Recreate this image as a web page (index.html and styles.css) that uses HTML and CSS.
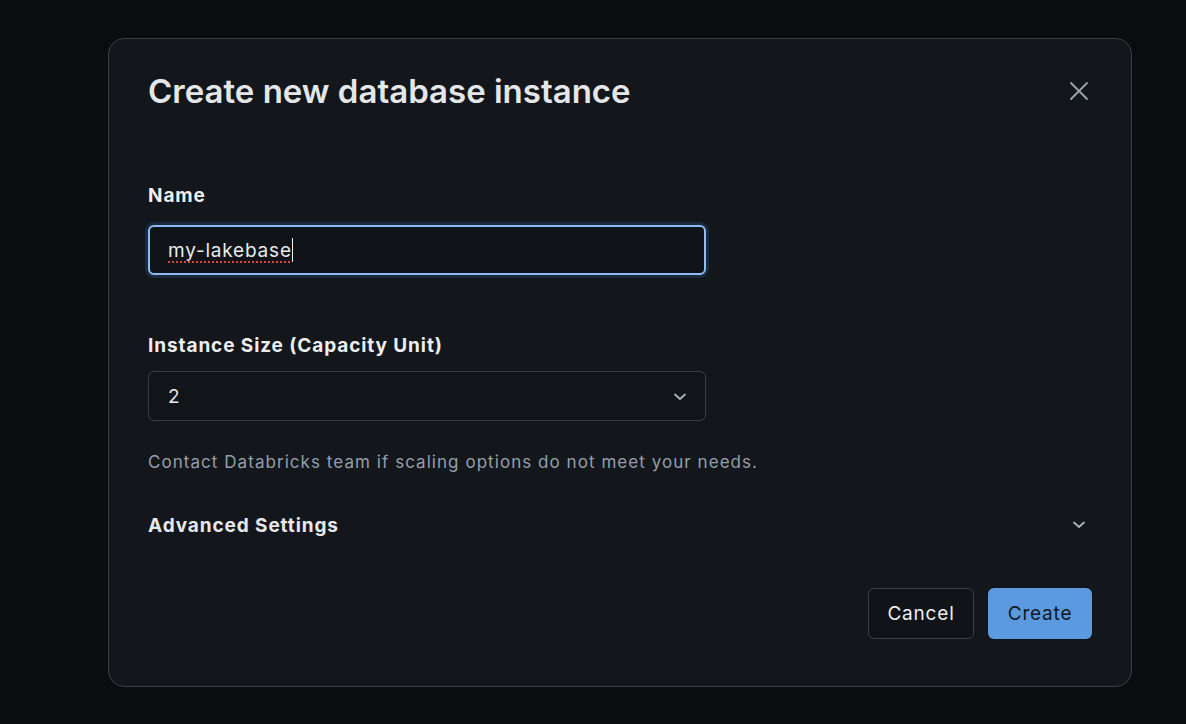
FILE: index.html
```html
<!DOCTYPE html>
<html lang="en">
<head>
<meta charset="utf-8">
<title>Create new database instance</title>
<link rel="stylesheet" href="styles.css">
</head>
<body>
<div class="page">
  <div class="modal">
    <div class="header">
      <h1 class="title">Create new database instance</h1>
      <button class="close" aria-label="Close">
        <svg width="20" height="20" viewBox="0 0 20 20"><path d="M2 2 L18 18 M18 2 L2 18" stroke="#9aa4af" stroke-width="1.8" stroke-linecap="round" fill="none"/></svg>
      </button>
    </div>

    <div class="field field-name">
      <div class="label">Name</div>
      <div class="input focused"><span class="typed">my-lakebase</span><span class="caret"></span></div>
    </div>

    <div class="field field-size">
      <div class="label">Instance Size (Capacity Unit)</div>
      <div class="input select">
        <span>2</span>
        <svg class="chev" width="14" height="8" viewBox="0 0 14 8"><path d="M2 1.5 L7 6 L12 1.5" stroke="#aab3bd" stroke-width="1.8" stroke-linecap="round" stroke-linejoin="round" fill="none"/></svg>
      </div>
    </div>

    <p class="help">Contact Databricks team if scaling options do not meet your needs.</p>

    <div class="advanced">
      <span>Advanced Settings</span>
      <svg class="chev-small" width="14" height="8" viewBox="0 0 14 8"><path d="M2 1.5 L7 6 L12 1.5" stroke="#aab3bd" stroke-width="1.8" stroke-linecap="round" stroke-linejoin="round" fill="none"/></svg>
    </div>

    <div class="footer">
      <button class="btn btn-cancel">Cancel</button>
      <button class="btn btn-create">Create</button>
    </div>
  </div>
</div>
</body>
</html>
```
FILE: styles.css
```css
html, body {
  margin: 0;
  padding: 0;
  background: #0a0c0f;
  font-family: Inter, "Noto Sans", "Liberation Sans", sans-serif;
}

.page {
  width: 1186px;
  height: 724px;
  padding: 38px 0 0 108px;
  box-sizing: border-box;
}

.modal {
  width: 1024px;
  height: 649px;
  box-sizing: border-box;
  background: #13171b;
  border: 1px solid #3a4047;
  border-radius: 16px;
  padding: 32px 39px 0 39px;
  display: flex;
  flex-direction: column;
}

.header {
  display: flex;
  align-items: center;
  justify-content: space-between;
  height: 40px;
}

.title {
  margin: 0;
  font-size: 33px;
  line-height: 40px;
  font-weight: 600;
  color: #e4e6e9;
  letter-spacing: 0;
}

.close {
  width: 26px;
  height: 26px;
  padding: 0;
  background: none;
  border: none;
  display: flex;
  align-items: center;
  justify-content: center;
}

.field-name {
  margin-top: 73px;
}

.field-size {
  margin-top: 59px;
}

.label {
  font-size: 19px;
  line-height: 24px;
  font-weight: 650;
  color: #eceef0;
  letter-spacing: 0.9px;
}

.input {
  width: 558px;
  height: 50px;
  box-sizing: border-box;
  background: #101317;
  border-radius: 6px;
  display: flex;
  align-items: center;
  font-size: 19px;
  letter-spacing: 0.8px;
  color: #e8eaed;
}

.field-name .input {
  margin-top: 17px;
}

.focused {
  border: 2px solid #8cbcf2;
  box-shadow: 0 0 0 3px #1b2a3c;
  padding-left: 18px;
}

.typed {
  text-decoration: underline dotted #d8473c;
  text-decoration-thickness: 2px;
  text-underline-offset: 5px;
}

.caret {
  display: inline-block;
  width: 1.5px;
  height: 24px;
  background: #f0f0f0;
  margin-left: 0;
}

.select {
  margin-top: 13px;
  border: 1px solid #383e46;
  padding: 0 18px 0 19px;
  justify-content: space-between;
  background: #111418;
}

.chev {
  margin-top: 1px;
}

.help {
  margin: 29px 0 0 0;
  font-size: 17px;
  line-height: 24px;
  color: #949fab;
  letter-spacing: 1.05px;
}

.advanced {
  margin-top: 39px;
  height: 24px;
  display: flex;
  align-items: center;
  justify-content: space-between;
  font-size: 19px;
  font-weight: 650;
  color: #e6e8eb;
  letter-spacing: 0.9px;
  padding-right: 6px;
}

.footer {
  margin-top: 51px;
  display: flex;
  justify-content: flex-end;
  gap: 14px;
}

.btn {
  height: 51px;
  box-sizing: border-box;
  border-radius: 6px;
  font-family: Inter, "Noto Sans", "Liberation Sans", sans-serif;
  font-size: 19px;
  letter-spacing: 0.8px;
  font-weight: 400;
  padding: 0;
}

.btn-cancel {
  width: 106px;
  background: #101317;
  border: 1px solid #3a4047;
  color: #eceef0;
}

.btn-create {
  width: 104px;
  background: #5b9ade;
  border: none;
  color: #111922;
}
```
